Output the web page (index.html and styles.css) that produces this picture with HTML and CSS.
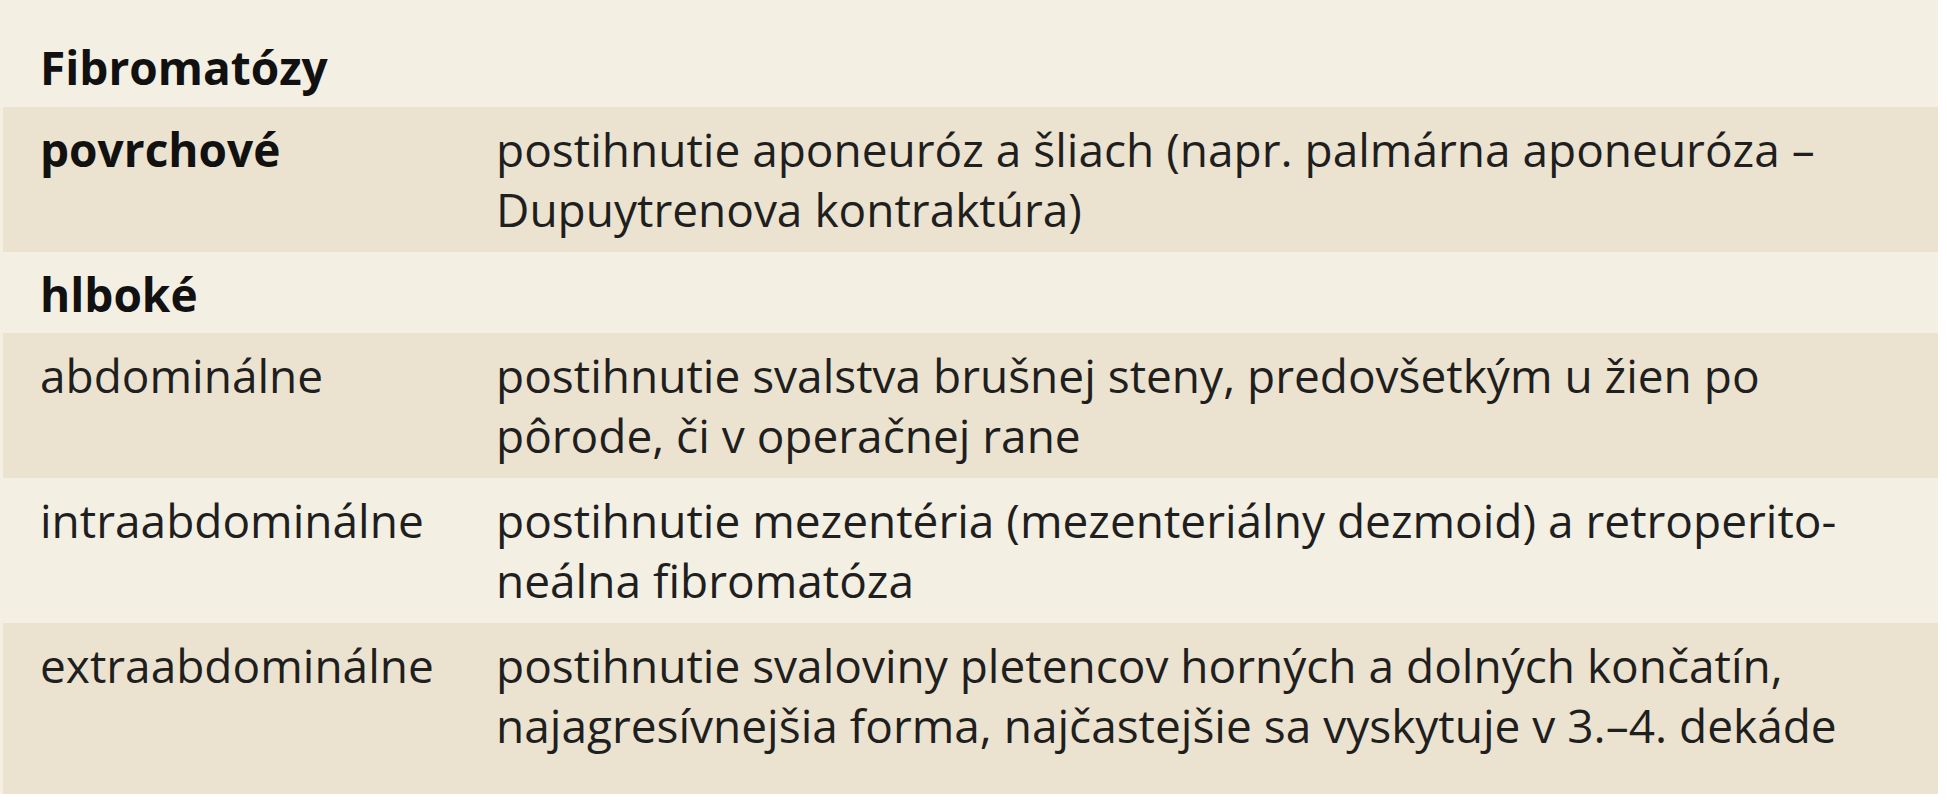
FILE: index.html
```html
<!DOCTYPE html>
<html lang="sk">
<head>
<meta charset="utf-8">
<title>Fibromatózy</title>
<link rel="stylesheet" href="styles.css">
</head>
<body>
<div class="table">
  <div class="row group first">
    <div class="label bold">Fibromatózy</div>
    <div class="text"></div>
  </div>
  <div class="row dark">
    <div class="label bold">povrchové</div>
    <div class="text">postihnutie aponeuróz a šliach (napr. palmárna aponeuróza –<br>Dupuytrenova kontraktúra)</div>
  </div>
  <div class="row group">
    <div class="label bold">hlboké</div>
    <div class="text"></div>
  </div>
  <div class="row dark">
    <div class="label">abdominálne</div>
    <div class="text">postihnutie svalstva brušnej steny, predovšetkým u žien po<br>pôrode, či v operačnej rane</div>
  </div>
  <div class="row">
    <div class="label">intraabdominálne</div>
    <div class="text">postihnutie mezentéria (mezenteriálny dezmoid) a retroperito-<br>neálna fibromatóza</div>
  </div>
  <div class="row dark last">
    <div class="label">extraabdominálne</div>
    <div class="text">postihnutie svaloviny pletencov horných a dolných končatín,<br>najagresívnejšia forma, najčastejšie sa vyskytuje v 3.–4. dekáde</div>
  </div>
</div>
</body>
</html>
```
FILE: styles.css
```css
html, body {
  margin: 0;
  padding: 0;
  background: #ffffff;
}

body {
  font-family: "Open Sans", "Noto Sans", sans-serif;
  font-size: 46px;
  line-height: 60px;
  color: #1f1f1f;
}

.table {
  width: 1938px;
  background: #f3efe3;
}

.row {
  display: grid;
  grid-template-columns: 496px 1fr;
  padding: 12px 0 13px;
}

.row.group {
  padding-bottom: 9px;
}

.row.first {
  padding-top: 37px;
  padding-bottom: 10px;
}

.row.dark {
  background: #ebe3cf;
  margin-left: 3px;
  grid-template-columns: 493px 1fr;
}

.row.last {
  padding-bottom: 39px;
}

.label {
  padding-left: 40px;
  white-space: nowrap;
}

.row.dark .label {
  padding-left: 37px;
}

.bold {
  font-weight: 700;
  color: #111111;
}

.text {
  white-space: nowrap;
}
```
